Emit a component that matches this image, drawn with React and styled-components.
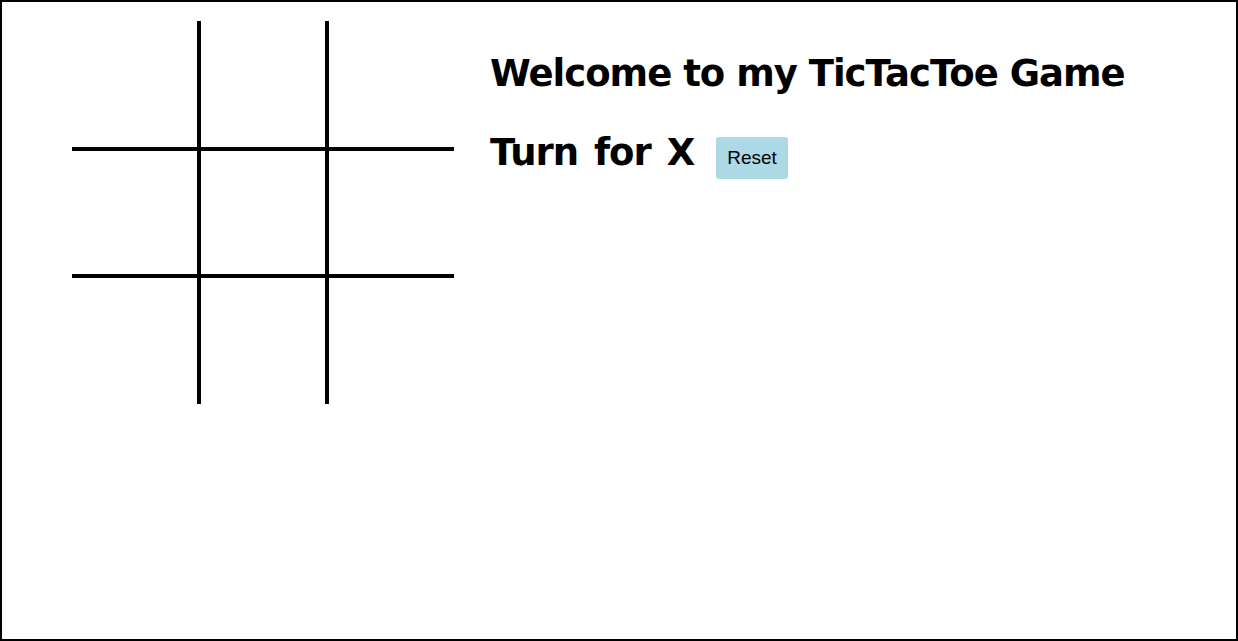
import React, { useState } from "react";
import styled, { createGlobalStyle } from "styled-components";

const GlobalStyle = createGlobalStyle`
  html, body {
    margin: 0;
    padding: 0;
    background: #fff;
  }
  * {
    box-sizing: border-box;
  }
`;

const Page = styled.main`
  display: flex;
  align-items: flex-start;
  height: 100vh;
  padding: 19px 0 0 70px;
  border: 2px solid #000;
  font-family: "Comic Sans MS", "DejaVu Sans", sans-serif;
`;

const Board = styled.div`
  display: grid;
  grid-template-columns: 125px 124px 125px;
  grid-template-rows: 126px 123px 126px;
  gap: 4px;
  background: #000;
`;

const Cell = styled.div`
  display: flex;
  align-items: center;
  justify-content: center;
  background: #fff;
  font-size: 64px;
  font-weight: bold;
  cursor: pointer;
`;

const Info = styled.section`
  margin-left: 36px;
  padding-top: 29px;
`;

const Heading = styled.h1`
  display: flex;
  align-items: flex-start;
  margin: ${(p) => (p.$spaced ? "31px 0 0" : "0")};
  font-size: 37px;
  line-height: 48px;
  letter-spacing: -1px;
  word-spacing: ${(p) => (p.$spaced ? "4px" : "0")};
  font-weight: bold;
  white-space: nowrap;
`;

const ResetButton = styled.button`
  margin: 8px 0 0 22px;
  padding: 0 11px;
  height: 42px;
  border: none;
  border-radius: 3px;
  background: lightblue;
  color: #000;
  font-family: "Liberation Sans", Arial, sans-serif;
  font-size: 19px;
  font-weight: normal;
  letter-spacing: 0;
  word-spacing: 0;
  cursor: pointer;
`;

export default function App() {
  const [cells, setCells] = useState(Array(9).fill(""));
  const [turn, setTurn] = useState("X");

  const play = (i) => {
    if (cells[i]) return;
    const next = [...cells];
    next[i] = turn;
    setCells(next);
    setTurn(turn === "X" ? "O" : "X");
  };

  const reset = () => {
    setCells(Array(9).fill(""));
    setTurn("X");
  };

  return (
    <>
      <GlobalStyle />
      <Page>
        <Board>
          {cells.map((c, i) => (
            <Cell key={i} onClick={() => play(i)}>
              {c}
            </Cell>
          ))}
        </Board>
        <Info>
          <Heading>Welcome to my TicTacToe Game</Heading>
          <Heading $spaced>
            Turn for {turn}
            <ResetButton onClick={reset}>Reset</ResetButton>
          </Heading>
        </Info>
      </Page>
    </>
  );
}
